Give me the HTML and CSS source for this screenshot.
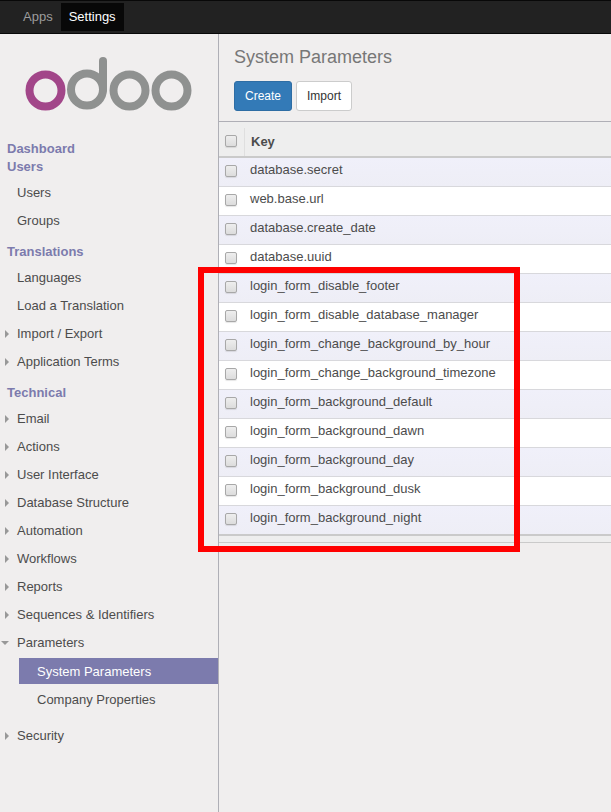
FILE: index.html
```html
<!DOCTYPE html>
<html lang="en">
<head>
<meta charset="utf-8">
<meta name="viewport" content="width=device-width, initial-scale=1">
<title>System Parameters - Odoo</title>
<link rel="stylesheet" href="styles.css">
</head>
<body>
<nav class="topbar">
  <a class="topbar-link" href="#">Apps</a>
  <a class="topbar-link active" href="#">Settings</a>
</nav>
<div class="layout">
  <aside class="sidebar">
    <a class="logo" href="#" aria-label="Odoo">
      <svg width="168" height="56" viewBox="0 0 168 56" fill="none" stroke="#8f9190" stroke-width="8">
        <circle cx="21.5" cy="34.5" r="16" stroke="#a24689"/>
        <circle cx="63" cy="33.5" r="16"/>
        <path d="M79 33.500V5" stroke-linecap="round"/>
        <circle cx="105.500" cy="34.500" r="16"/>
        <circle cx="147.500" cy="34.500" r="16"/>
      </svg>
    </a>
    <h2 class="menu-title">Dashboard</h2>
    <h2 class="menu-title">Users</h2>
    <ul class="menu">
      <li><a class="item" href="#">Users</a></li>
      <li><a class="item" href="#">Groups</a></li>
    </ul>
    <h2 class="menu-title">Translations</h2>
    <ul class="menu">
      <li><a class="item" href="#">Languages</a></li>
      <li><a class="item" href="#">Load a Translation</a></li>
      <li><a class="item closed" href="#">Import / Export</a></li>
      <li><a class="item closed" href="#">Application Terms</a></li>
    </ul>
    <h2 class="menu-title">Technical</h2>
    <ul class="menu">
      <li><a class="item closed" href="#">Email</a></li>
      <li><a class="item closed" href="#">Actions</a></li>
      <li><a class="item closed" href="#">User Interface</a></li>
      <li><a class="item closed" href="#">Database Structure</a></li>
      <li><a class="item closed" href="#">Automation</a></li>
      <li><a class="item closed" href="#">Workflows</a></li>
      <li><a class="item closed" href="#">Reports</a></li>
      <li><a class="item closed" href="#">Sequences &amp; Identifiers</a></li>
      <li>
        <a class="item opened" href="#">Parameters</a>
        <ul class="submenu">
          <li><a class="subitem active" href="#">System Parameters</a></li>
          <li><a class="subitem" href="#">Company Properties</a></li>
        </ul>
      </li>
      <li><a class="item closed" href="#">Security</a></li>
    </ul>
  </aside>
  <main class="content">
    <header class="control-panel">
      <h1 class="title">System Parameters</h1>
      <div class="buttons">
        <button class="btn btn-primary" type="button">Create</button>
        <button class="btn" type="button">Import</button>
      </div>
    </header>
    <div class="list">
      <table class="list-table">
        <thead>
          <tr><th class="select"><input type="checkbox" aria-label="Select all"></th><th class="key"><span>Key</span></th></tr>
        </thead>
        <tbody>
          <tr><td class="select"><input type="checkbox" id="p1"></td><td><label for="p1">database.secret</label></td></tr>
          <tr><td class="select"><input type="checkbox" id="p2"></td><td><label for="p2">web.base.url</label></td></tr>
          <tr><td class="select"><input type="checkbox" id="p3"></td><td><label for="p3">database.create_date</label></td></tr>
          <tr><td class="select"><input type="checkbox" id="p4"></td><td><label for="p4">database.uuid</label></td></tr>
          <tr><td class="select"><input type="checkbox" id="p5"></td><td><label for="p5">login_form_disable_footer</label></td></tr>
          <tr><td class="select"><input type="checkbox" id="p6"></td><td><label for="p6">login_form_disable_database_manager</label></td></tr>
          <tr><td class="select"><input type="checkbox" id="p7"></td><td><label for="p7">login_form_change_background_by_hour</label></td></tr>
          <tr><td class="select"><input type="checkbox" id="p8"></td><td><label for="p8">login_form_change_background_timezone</label></td></tr>
          <tr><td class="select"><input type="checkbox" id="p9"></td><td><label for="p9">login_form_background_default</label></td></tr>
          <tr><td class="select"><input type="checkbox" id="p10"></td><td><label for="p10">login_form_background_dawn</label></td></tr>
          <tr><td class="select"><input type="checkbox" id="p11"></td><td><label for="p11">login_form_background_day</label></td></tr>
          <tr><td class="select"><input type="checkbox" id="p12"></td><td><label for="p12">login_form_background_dusk</label></td></tr>
          <tr><td class="select"><input type="checkbox" id="p13"></td><td><label for="p13">login_form_background_night</label></td></tr>
        </tbody>
      </table>
      <div class="list-footer"></div>
      <div class="highlight"></div>
    </div>
  </main>
</div>
</body>
</html>
```
FILE: styles.css
```css
* {
  box-sizing: border-box;
}

body {
  margin: 0;
  min-height: 100vh;
  display: flex;
  flex-direction: column;
  background: #f0eeee;
  color: #4c4c4c;
  font: 13px/18px "Liberation Sans", Arial, sans-serif;
}

a {
  color: inherit;
  text-decoration: none;
}

ul {
  margin: 0;
  padding: 0;
  list-style: none;
}

/* Top navigation */
.topbar {
  display: flex;
  padding: 2px 15px;
  background: #222;
  border-top: 1px solid #080808;
  border-bottom: 1px solid #080808;
}

.topbar-link {
  padding: 5px 8px;
  color: #9d9d9d;
}

.topbar-link.active {
  background: #080808;
  color: #fff;
}

.layout {
  flex: 1;
  display: flex;
}

/* Side menu */
.sidebar {
  flex: none;
  width: 219px;
  border-right: 1px solid #afafb6;
}

.logo {
  display: block;
  padding: 22px 24px 28px;
}

.logo svg {
  display: block;
}

.menu-title {
  margin: 0;
  padding-left: 7px;
  color: #7c7bad;
  font-size: 13px;
  line-height: 18px;
}

.menu {
  padding: 3px 0 8px;
}

.item {
  display: flex;
  align-items: center;
  height: 28px;
  padding-left: 17px;
}

.item.closed {
  padding-left: 5px;
}

.item.closed::before,
.item.opened::before {
  content: "";
  flex: none;
  margin-right: 8px;
  border: 4px solid transparent;
}

.item.closed::before {
  border-right: 0;
  border-left-color: #989898;
}

.item.opened {
  padding-left: 1px;
}

.item.opened::before {
  border-bottom: 0;
  border-top-color: #989898;
}

.submenu {
  display: flex;
  flex-direction: column;
  gap: 2px;
  margin-left: 19px;
  padding: 1px 0 10px;
}

.subitem {
  display: block;
  padding: 5px 18px 3px;
}

.subitem.active {
  background: #7c7bad;
  color: #fff;
}

/* Main area */
.content {
  flex: 1;
  min-width: 0;
}

.control-panel {
  padding: 11px 15px 10px;
  border-bottom: 1px solid #afafb6;
}

.title {
  margin: 0 0 12px;
  color: #777;
  font-size: 18px;
  font-weight: normal;
  line-height: 24px;
}

.buttons {
  display: flex;
  gap: 4px;
}

.btn {
  height: 30px;
  padding: 0 10px;
  border: 1px solid #ccc;
  border-radius: 3px;
  background: #fff;
  color: #333;
  font: 12px/18px "Liberation Sans", Arial, sans-serif;
}

.btn-primary {
  border-color: #2e6da4;
  background: #337ab7;
  color: #fff;
}

/* List */
.list {
  position: relative;
}

.list-table {
  width: 100%;
  border-collapse: separate;
  border-spacing: 0;
}

.list-table th,
.list-table td {
  padding: 0 6px;
  text-align: left;
}

.list-table .select {
  width: 25px;
  padding: 0 0 0 6px;
}

.list-table th {
  height: 36px;
  border-bottom: 2px solid #cacaca;
  background: #eee;
}

.list-table th.select {
  padding-top: 4px;
}

.list-table th.key {
  padding: 6px 0 0;
}

.key span {
  display: block;
  padding: 5px 6px;
  border-left: 1px solid #dfdfdf;
}

.list-table td {
  height: 29px;
  padding-bottom: 4px;
  border-bottom: 1px solid #d8d8dc;
  background: #fff;
}

.list-table td.select {
  padding-bottom: 2px;
}

.list-table tbody tr:nth-child(odd) td {
  background: linear-gradient(#f0f0fa, #eeeef6);
}

.list-table tbody tr:last-child td {
  height: 30px;
  border-bottom: 2px solid #cacaca;
}

.list-table input {
  appearance: none;
  display: block;
  width: 12px;
  height: 12px;
  margin: 0;
  border: 1px solid #a8a8a8;
  border-radius: 2px;
  background: linear-gradient(#eee, #dcdcdc);
  box-shadow: 0 1px 1px #0000001a;
}

.list-footer {
  height: 7px;
  border-bottom: 1px solid #cacaca;
  background: #eee;
}

/* Frame around the login form parameters */
.highlight {
  position: absolute;
  top: 145px;
  left: -21px;
  width: 322px;
  height: 285px;
  border: 6px solid #f00;
  pointer-events: none;
}
```
